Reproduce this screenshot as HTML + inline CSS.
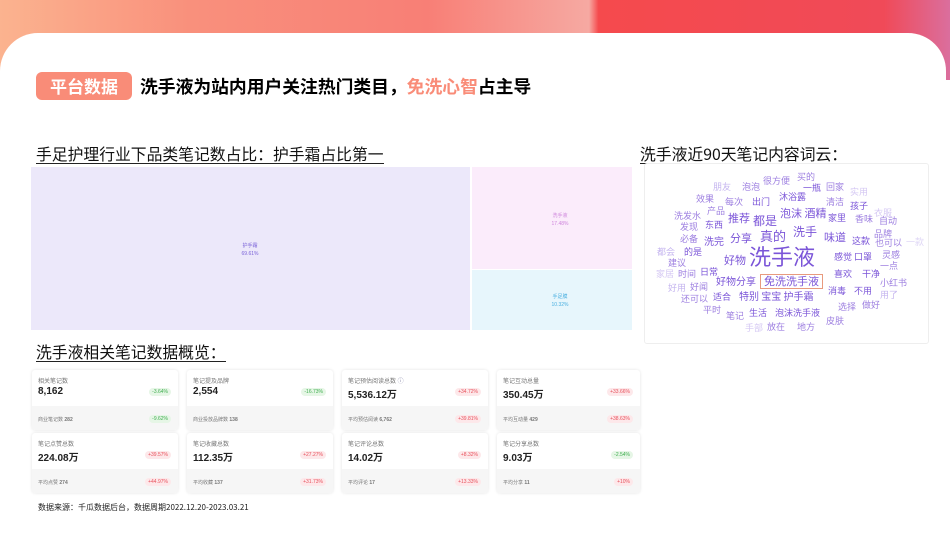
<!DOCTYPE html>
<html><head><meta charset="utf-8"><style>
*{margin:0;padding:0;box-sizing:border-box}
body{width:950px;height:535px;overflow:hidden;position:relative;font-family:"Liberation Sans","Noto Sans CJK SC",sans-serif;background:#fff}
.top{position:absolute;left:0;top:0;width:950px;height:80px;background:linear-gradient(90deg,#fbb38f 0%,#f9907c 20%,#f87f76 45%,#f6a9a2 62%,#f54a4d 63%,#f34c55 85%,#d670a8 96%,#c88ad8 100%)}
.top2{position:absolute;left:604px;top:0;width:400px;height:80px;background:linear-gradient(90deg,#f54a4d,#f04a58 70%,#c98cd6 100%);clip-path:polygon(0 0,100% 0,100% 100%,40px 100%)}
.card{position:absolute;left:0;top:33px;width:946px;height:510px;background:#fff;border-radius:38px 38px 0 0}
.tag{position:absolute;left:36px;top:72px;width:96px;height:28px;background:#f98c78;border-radius:6px;color:#fff;font-size:17px;font-weight:bold;line-height:28px;text-align:center;font-family:"Noto Sans CJK SC",sans-serif}
.title{position:absolute;left:140px;top:73px;font-size:17.8px;font-weight:bold;font-family:"Noto Sans CJK SC",sans-serif;line-height:26px}
.h{position:absolute;font-size:15.8px;border-bottom:1px solid #222;line-height:18px;font-family:"Noto Sans CJK SC",sans-serif;color:#111}
.tm{position:absolute;font-size:5px;text-align:center;line-height:8px}
.c{position:absolute;width:146px;height:60px;border-radius:3px;box-shadow:0 0 3px #e4e4e4;overflow:hidden;background:#fff}
.c .l{position:absolute;left:6px;top:6px;font-size:6px;color:#777}
.c .v{position:absolute;left:6px;top:16px;font-size:10px;font-weight:bold;color:#222}
.c .bt{position:absolute;left:0;top:36px;width:100%;height:24px;background:#f6f6f6;font-size:5px;color:#777;padding:10px 6px}
.p{position:absolute;right:7px;font-size:5px;padding:1px 3px;border-radius:4px}
.r{color:#e8505b;background:#fde8ea}.g{color:#3fae4f;background:#e6f6e6}
.wc{position:absolute;left:644px;top:163px;width:285px;height:181px;border:1px solid #eee;border-radius:3px}
.w{position:absolute;white-space:nowrap;font-family:"Noto Sans CJK SC",sans-serif;line-height:1}
</style></head><body>
<div class="top"></div><div class="top2"></div>
<div class="card"></div>
<div class="tag">平台数据</div>
<div class="title">洗手液为站内用户关注热门类目，<span style="color:#f98c78">免洗心智</span>占主导</div>
<div class="h" style="left:36px;top:145px">手足护理行业下品类笔记数占比：护手霜占比第一</div>
<div style="position:absolute;left:31px;top:167px;width:439px;height:163px;background:#ece8fa"></div>
<div style="position:absolute;left:472px;top:167px;width:160px;height:102px;background:#fbecfb"></div>
<div style="position:absolute;left:472px;top:270px;width:160px;height:60px;background:#e7f6fc"></div>
<div class="tm" style="left:230px;top:242px;width:40px;color:#7b63d8">护手霜<br>69.61%</div>
<div class="tm" style="left:540px;top:212px;width:40px;color:#cf86dc">洗手液<br>17.48%</div>
<div class="tm" style="left:540px;top:293px;width:40px;color:#4bb0e0">手足膜<br>10.32%</div>
<div class="h" style="left:36px;top:343px">洗手液相关笔记数据概览：</div>

<div class="c" style="left:32px;top:370px"><div class="l">相关笔记数</div><div class="v">8,162</div><span class="p g" style="top:18px">-3.64%</span><div class="bt">商业笔记数 <b>282</b></div><span class="p g" style="top:45px">-9.62%</span></div>
<div class="c" style="left:187px;top:370px"><div class="l">笔记提及品牌</div><div class="v">2,554</div><span class="p g" style="top:18px">-16.73%</span><div class="bt">商业投放品牌数 <b>138</b></div></div>
<div class="c" style="left:342px;top:370px"><div class="l">笔记预估阅读总数 <span style="color:#88a">ⓘ</span></div><div class="v">5,536.12万</div><span class="p r" style="top:18px">+34.72%</span><div class="bt">平均预估阅读 <b>6,762</b></div><span class="p r" style="top:45px">+39.81%</span></div>
<div class="c" style="left:497px;top:370px;width:143px"><div class="l">笔记互动总量</div><div class="v">350.45万</div><span class="p r" style="top:18px">+33.66%</span><div class="bt">平均互动量 <b>429</b></div><span class="p r" style="top:45px">+38.63%</span></div>

<div class="c" style="left:32px;top:433px"><div class="l">笔记点赞总数</div><div class="v">224.08万</div><span class="p r" style="top:18px">+39.57%</span><div class="bt">平均点赞 <b>274</b></div><span class="p r" style="top:45px">+44.97%</span></div>
<div class="c" style="left:187px;top:433px"><div class="l">笔记收藏总数</div><div class="v">112.35万</div><span class="p r" style="top:18px">+27.27%</span><div class="bt">平均收藏 <b>137</b></div><span class="p r" style="top:45px">+31.73%</span></div>
<div class="c" style="left:342px;top:433px"><div class="l">笔记评论总数</div><div class="v">14.02万</div><span class="p r" style="top:18px">+8.32%</span><div class="bt">平均评论 <b>17</b></div><span class="p r" style="top:45px">+13.33%</span></div>
<div class="c" style="left:497px;top:433px;width:143px"><div class="l">笔记分享总数</div><div class="v">9.03万</div><span class="p g" style="top:18px">-2.54%</span><div class="bt">平均分享 <b>11</b></div><span class="p r" style="top:45px">+10%</span></div>

<div style="position:absolute;left:38px;top:502px;font-size:8px;color:#222;font-family:'Noto Sans CJK SC',sans-serif">数据来源：千瓜数据后台，数据周期2022.12.20-2023.03.21</div>

<div class="h" style="left:640px;top:145px">洗手液近90天笔记内容词云：</div>
<div class="wc"></div>
<div style="font-size:9px;color:#9d7fe0">
<span class="w" style="left:713px;top:182px;color:#c5b5ef">朋友</span>
<span class="w" style="left:742px;top:182px">泡泡</span>
<span class="w" style="left:763px;top:176px">很方便</span>
<span class="w" style="left:797px;top:172px">买的</span>
<span class="w" style="left:803px;top:183px;color:#7b55d8">一瓶</span>
<span class="w" style="left:826px;top:182px">回家</span>
<span class="w" style="left:850px;top:187px;color:#d5c8f3">实用</span>
<span class="w" style="left:696px;top:194px">效果</span>
<span class="w" style="left:725px;top:197px">每次</span>
<span class="w" style="left:752px;top:197px;color:#7b55d8">出门</span>
<span class="w" style="left:779px;top:192px;color:#7b55d8">沐浴露</span>
<span class="w" style="left:826px;top:197px">清洁</span>
<span class="w" style="left:850px;top:201px;color:#7b55d8">孩子</span>
<span class="w" style="left:674px;top:211px">洗发水</span>
<span class="w" style="left:707px;top:206px">产品</span>
<span class="w" style="left:874px;top:208px;color:#d5c8f3">衣服</span>
<span class="w" style="left:780px;top:208px;font-size:11px;color:#7b55d8">泡沫 酒精</span>
<span class="w" style="left:728px;top:213px;font-size:11px;color:#7b55d8">推荐</span>
<span class="w" style="left:753px;top:215px;font-size:12px;color:#7b55d8">都是</span>
<span class="w" style="left:828px;top:213px;color:#7b55d8">家里</span>
<span class="w" style="left:855px;top:214px">香味</span>
<span class="w" style="left:879px;top:216px">自动</span>
<span class="w" style="left:680px;top:222px">发现</span>
<span class="w" style="left:705px;top:220px;color:#7b55d8">东西</span>
<span class="w" style="left:874px;top:229px">品牌</span>
<span class="w" style="left:680px;top:234px">必备</span>
<span class="w" style="left:704px;top:236px;font-size:10px;color:#7b55d8">洗完</span>
<span class="w" style="left:730px;top:233px;font-size:11px;color:#7b55d8">分享</span>
<span class="w" style="left:760px;top:229px;font-size:13px;color:#7b55d8">真的</span>
<span class="w" style="left:793px;top:226px;font-size:12px;color:#7b55d8">洗手</span>
<span class="w" style="left:824px;top:232px;font-size:11px;color:#7b55d8">味道</span>
<span class="w" style="left:852px;top:236px;color:#7b55d8">这款</span>
<span class="w" style="left:875px;top:238px">也可以</span>
<span class="w" style="left:906px;top:237px;color:#e0d8f6">一款</span>
<span class="w" style="left:657px;top:247px;color:#c5b5ef">都会</span>
<span class="w" style="left:684px;top:247px;color:#7b55d8">的是</span>
<span class="w" style="left:749px;top:245px;font-size:22px;color:#7b55d8">洗手液</span>
<span class="w" style="left:834px;top:252px;color:#7b55d8">感觉 口罩</span>
<span class="w" style="left:882px;top:250px">灵感</span>
<span class="w" style="left:668px;top:258px">建议</span>
<span class="w" style="left:724px;top:255px;font-size:11px;color:#7b55d8">好物</span>
<span class="w" style="left:880px;top:261px">一点</span>
<span class="w" style="left:656px;top:269px;color:#d5c8f3">家居</span>
<span class="w" style="left:678px;top:269px">时间</span>
<span class="w" style="left:700px;top:267px;color:#7b55d8">日常</span>
<span class="w" style="left:834px;top:269px;color:#7b55d8">喜欢</span>
<span class="w" style="left:862px;top:269px;color:#7b55d8">干净</span>
<span class="w" style="left:716px;top:276px;font-size:10px;color:#7b55d8">好物分享</span>
<span class="w" style="left:760px;top:274px;font-size:11px;color:#7b55d8;border:1px solid #e89a7e;padding:1px 3px">免洗洗手液</span>
<span class="w" style="left:880px;top:278px">小红书</span>
<span class="w" style="left:668px;top:283px;color:#c5b5ef">好用</span>
<span class="w" style="left:690px;top:282px">好闻</span>
<span class="w" style="left:828px;top:286px;color:#7b55d8">消毒</span>
<span class="w" style="left:854px;top:286px;color:#7b55d8">不用</span>
<span class="w" style="left:880px;top:290px;color:#c5b5ef">用了</span>
<span class="w" style="left:681px;top:294px">还可以</span>
<span class="w" style="left:713px;top:292px;color:#7b55d8">适合</span>
<span class="w" style="left:739px;top:291px;font-size:10px;color:#7b55d8">特别 宝宝 护手霜</span>
<span class="w" style="left:838px;top:302px">选择</span>
<span class="w" style="left:862px;top:300px">做好</span>
<span class="w" style="left:703px;top:305px">平时</span>
<span class="w" style="left:726px;top:311px">笔记</span>
<span class="w" style="left:749px;top:308px;color:#7b55d8">生活</span>
<span class="w" style="left:775px;top:308px;color:#7b55d8">泡沫洗手液</span>
<span class="w" style="left:826px;top:316px">皮肤</span>
<span class="w" style="left:745px;top:323px;color:#d5c8f3">手部</span>
<span class="w" style="left:767px;top:322px">放在</span>
<span class="w" style="left:797px;top:322px">地方</span>
</div>
</body></html>
